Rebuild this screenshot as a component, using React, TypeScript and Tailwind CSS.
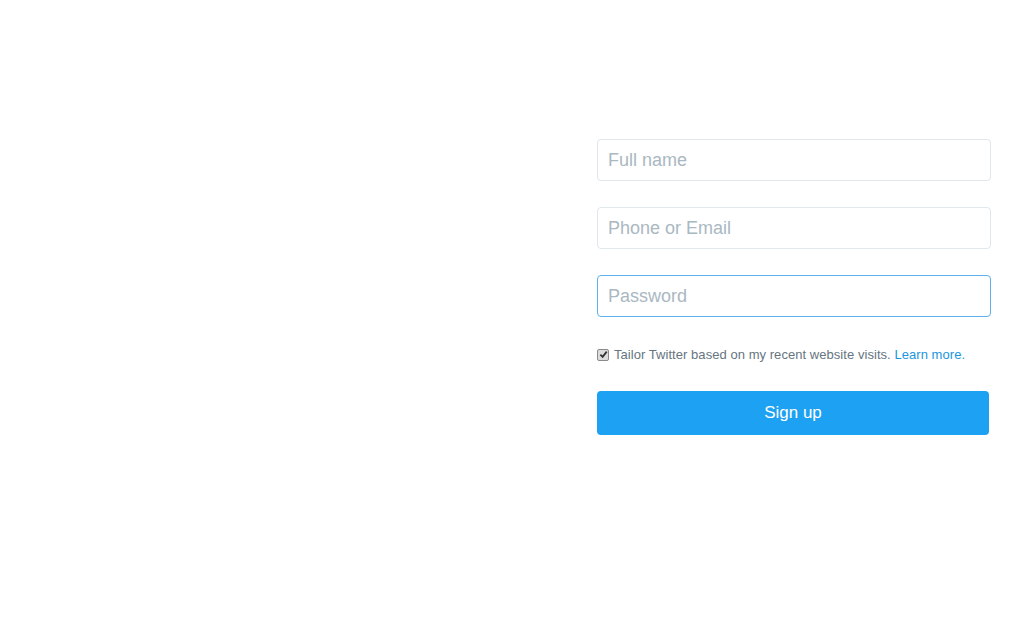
import { useState } from "react";

export default function App() {
  const [checked, setChecked] = useState(true);
  const baseCls =
    "h-[42px] w-full rounded-[4px] border bg-white px-[10px] text-[18px] text-[#14171a] outline-none placeholder:text-[#aab8c2] focus:border-[#5eb1ec]";

  return (
    <div className="flex h-[640px] w-[1024px] bg-white font-['Liberation_Sans',Arial,sans-serif]">
      <div className="flex-1" />
      <div className="mr-[33px] w-[394px] pt-[139px]">
        <div className="flex flex-col gap-[26px]">
          <input className={baseCls + " border-[#e1e8ed]"} placeholder="Full name" />
          <input className={baseCls + " border-[#e1e8ed]"} placeholder="Phone or Email" />
          <input type="password" className={baseCls + " border-[#5eb1ec]"} placeholder="Password" />
        </div>
        <label className="mt-[28px] flex items-center gap-[5px] text-[13px] tracking-[0.05px] text-[#66757f]">
          <span
            onClick={() => setChecked(!checked)}
            className="flex h-[12px] w-[12px] items-center justify-center rounded-[2px] border border-[#8a8a8a] bg-[#dcdcdc]"
          >
            {checked && (
              <svg viewBox="0 0 10 10" className="h-[9px] w-[9px]">
                <path d="M1.5 5.2 L4 7.6 L8.6 1.8" fill="none" stroke="#333" strokeWidth="2" />
              </svg>
            )}
          </span>
          <span>
            Tailor Twitter based on my recent website visits.{" "}
            <a className="text-[#1b95e0]">Learn more.</a>
          </span>
        </label>
        <button className="mt-[26px] h-[44px] w-[392px] rounded-[4px] bg-[#1da1f2] text-[17px] text-white">
          Sign up
        </button>
      </div>
    </div>
  );
}
